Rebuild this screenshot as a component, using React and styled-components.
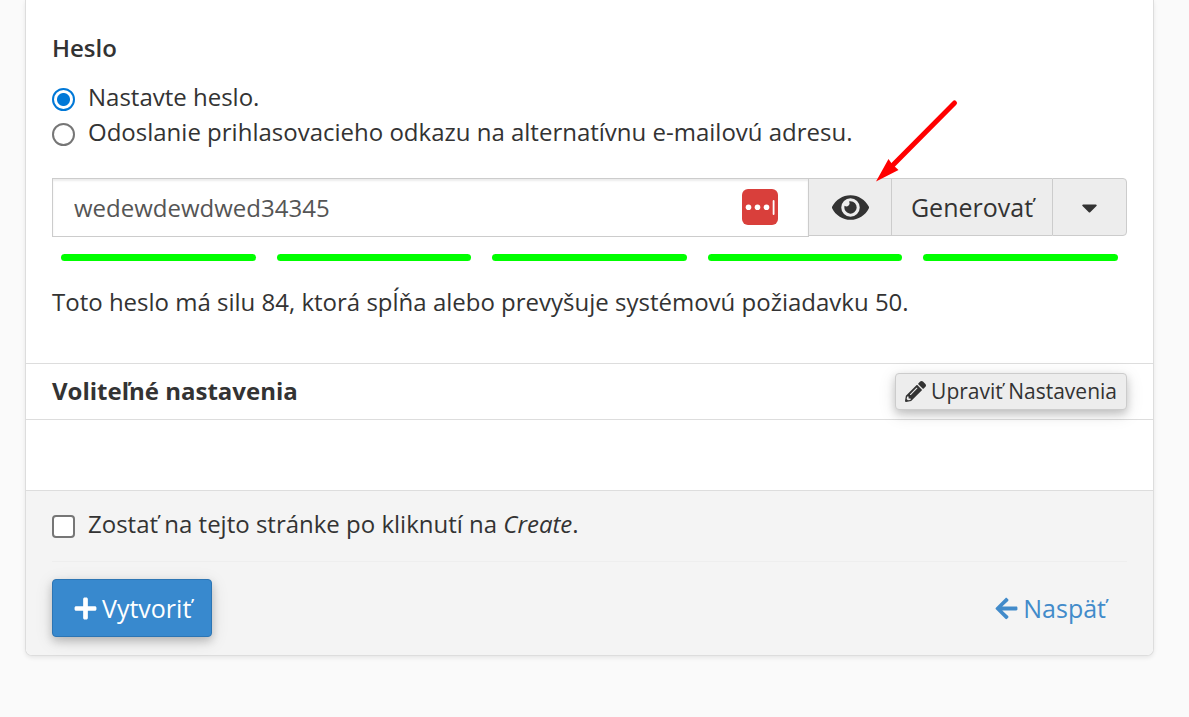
import React, { useState } from "react";
import styled, { createGlobalStyle, css } from "styled-components";
import { FaArrowLeft, FaCaretDown, FaEye, FaPencilAlt, FaPlus } from "react-icons/fa";

const GlobalStyle = createGlobalStyle`
  *, *::before, *::after { box-sizing: border-box; }
  body {
    margin: 0;
    background: #fafafa;
    color: #333;
    font-family: "Open Sans", "Noto Sans", sans-serif;
    font-size: 24px;
    line-height: 35px;
  }
  button, input { font: inherit; color: inherit; margin: 0; }
`;

const Page = styled.main`
  padding: 0 35px 61px 25px;
`;

const Panel = styled.form`
  background: #fff;
  border: 1px solid #ddd;
  border-top: 0;
  border-radius: 0 0 7px 7px;
  box-shadow: 0 2px 4px rgba(0, 0, 0, 0.08);
`;

const PasswordSection = styled.section`
  padding: 30px 26px 44px;
`;

const FieldTitle = styled.h2`
  margin: 0 0 14px;
  font-size: 24px;
  line-height: 35px;
  font-weight: 600;
`;

const Option = styled.label`
  display: flex;
  align-items: center;
  gap: 13px;
`;

const control = css`
  appearance: none;
  flex: none;
  width: 23px;
  height: 23px;
  margin-top: 6px;
  background: #fff;
  border: 2px solid #767676;
`;

const Radio = styled.input`
  ${control}
  border-radius: 50%;
  &:checked {
    border-color: #0078d7;
    background: radial-gradient(circle, #0078d7 6px, #fff 7px);
  }
`;

const Checkbox = styled.input`
  ${control}
  border-radius: 4px;
  &:checked {
    background: #0078d7;
  }
`;

const InputGroup = styled.div`
  display: flex;
  align-items: flex-start;
  margin-top: 29px;
`;

const InputWrap = styled.div`
  position: relative;
  flex: 1;
  min-width: 0;
`;

const TextInput = styled.input`
  display: block;
  width: 100%;
  height: 59px;
  padding: 0 80px 0 21px;
  color: #555;
  background: #fff;
  border: 1px solid #ccc;
  border-radius: 0;
  box-shadow: inset 0 2px 2px rgba(0, 0, 0, 0.075);
  outline: 0;
`;

const ManagerBadge = styled.svg`
  position: absolute;
  top: 11px;
  right: 31px;
  width: 36px;
  height: 36px;
`;

const AddonButton = styled.button`
  position: relative;
  display: flex;
  align-items: center;
  justify-content: center;
  height: 58px;
  width: ${(p) => p.$width};
  padding: 0;
  font-size: 25px;
  background: #ededed;
  border: 1px solid #ccc;
  border-left-width: ${(p) => (p.$first ? 0 : "1px")};
  border-right-width: ${(p) => (p.$last ? "1px" : 0)};
  border-radius: ${(p) => (p.$last ? "0 4px 4px 0" : 0)};
`;

const Pointer = styled.svg`
  position: absolute;
  left: 61px;
  bottom: 51px;
  width: 90px;
  height: 86px;
  pointer-events: none;
`;

const Meter = styled.div`
  display: grid;
  grid-template-columns: repeat(5, 1fr);
  gap: 21px;
  padding: 17px 9px 0;
`;

const MeterBar = styled.span`
  height: 7px;
  border-radius: 4px;
  background: #0f0;
`;

const Note = styled.p`
  margin: 23px 0 0;
`;

const SectionHeader = styled.header`
  display: flex;
  align-items: center;
  justify-content: space-between;
  height: 57px;
  padding: 0 26px;
  border: solid #ddd;
  border-width: 1px 0;
`;

const SectionTitle = styled.h2`
  margin: 0;
  padding-bottom: 2px;
  font-size: 24px;
  line-height: 35px;
  font-weight: 700;
`;

const Button = styled.button`
  display: inline-flex;
  align-items: center;
  border-radius: 4px;
  box-shadow: 0 4px 9px rgba(0, 0, 0, 0.18), 0 4px 18px rgba(0, 0, 0, 0.12);
  ${(p) =>
    p.$primary
      ? css`
          height: 58px;
          gap: 4px;
          padding: 0 20px;
          font-size: 25px;
          color: #fff;
          background: #3889ce;
          border: 1px solid #2c75b4;
        `
      : css`
          height: 37px;
          gap: 5px;
          padding: 0 9px;
          font-size: 21px;
          background: #ededed;
          border: 1px solid #ccc;
        `}
`;

const EmptySection = styled.div`
  height: 70px;
`;

const Footer = styled.footer`
  padding: 15px 26px 18px;
  background: #f4f4f4;
  border-top: 1px solid #ddd;
  border-radius: 0 0 6px 6px;
`;

const Actions = styled.div`
  display: flex;
  align-items: center;
  justify-content: space-between;
  margin-top: 20px;
  padding-top: 17px;
  border-top: 1px solid #eee;
`;

const BackLink = styled.a`
  display: inline-flex;
  align-items: center;
  gap: 4px;
  margin-right: 21px;
  font-size: 25px;
  color: #428bca;
  text-decoration: none;
`;

export default function App() {
  const [mode, setMode] = useState("set");
  const [password, setPassword] = useState("wedewdewdwed34345");

  return (
    <>
      <GlobalStyle />
      <Page>
        <Panel onSubmit={(e) => e.preventDefault()}>
          <PasswordSection>
            <FieldTitle id="password-title">Heslo</FieldTitle>
            <div role="radiogroup" aria-labelledby="password-title">
              <Option>
                <Radio type="radio" name="mode" checked={mode === "set"} onChange={() => setMode("set")} />
                <span>Nastavte heslo.</span>
              </Option>
              <Option>
                <Radio type="radio" name="mode" checked={mode === "send"} onChange={() => setMode("send")} />
                <span>Odoslanie prihlasovacieho odkazu na alternatívnu e-mailovú adresu.</span>
              </Option>
            </div>
            <InputGroup>
              <InputWrap>
                <TextInput
                  type="text"
                  aria-labelledby="password-title"
                  value={password}
                  onChange={(e) => setPassword(e.target.value)}
                />
                <ManagerBadge viewBox="0 0 36 36" aria-hidden="true">
                  <rect width="36" height="36" rx="6" fill="#d93f3b" />
                  <circle cx="6.500" cy="18.300" r="2.800" fill="#fff" />
                  <circle cx="15.500" cy="18.300" r="2.800" fill="#fff" />
                  <circle cx="24.500" cy="18.300" r="2.800" fill="#fff" />
                  <rect x="30.700" y="11" width="1.800" height="15" rx="0.900" fill="#fff" />
                </ManagerBadge>
              </InputWrap>
              <AddonButton type="button" $width="82px" $first aria-label="Zobraziť heslo">
                <FaEye size={37} />
                <Pointer viewBox="0 0 90 86" aria-hidden="true">
                  <path d="M84.500 5 L20 70" stroke="#f00" strokeWidth="5" strokeLinecap="round" />
                  <path d="M6 83.500 L18.500 61 L22 66 L28.500 72 Z" fill="#f00" />
                </Pointer>
              </AddonButton>
              <AddonButton type="button" $width="161px">Generovať</AddonButton>
              <AddonButton type="button" $width="75px" $last aria-label="Ďalšie možnosti">
                <FaCaretDown size={25} />
              </AddonButton>
            </InputGroup>
            <Meter>
              {[1, 2, 3, 4, 5].map((n) => (
                <MeterBar key={n} />
              ))}
            </Meter>
            <Note>Toto heslo má silu 84, ktorá spĺňa alebo prevyšuje systémovú požiadavku 50.</Note>
          </PasswordSection>

          <SectionHeader>
            <SectionTitle>Voliteľné nastavenia</SectionTitle>
            <Button type="button">
              <FaPencilAlt size={21} />
              Upraviť Nastavenia
            </Button>
          </SectionHeader>
          <EmptySection />

          <Footer>
            <Option>
              <Checkbox type="checkbox" />
              <span>
                Zostať na tejto stránke po kliknutí na <em>Create</em>.
              </span>
            </Option>
            <Actions>
              <Button type="submit" $primary>
                <FaPlus size={25} />
                Vytvoriť
              </Button>
              <BackLink href="#back">
                <FaArrowLeft size={25} />
                Naspäť
              </BackLink>
            </Actions>
          </Footer>
        </Panel>
      </Page>
    </>
  );
}
